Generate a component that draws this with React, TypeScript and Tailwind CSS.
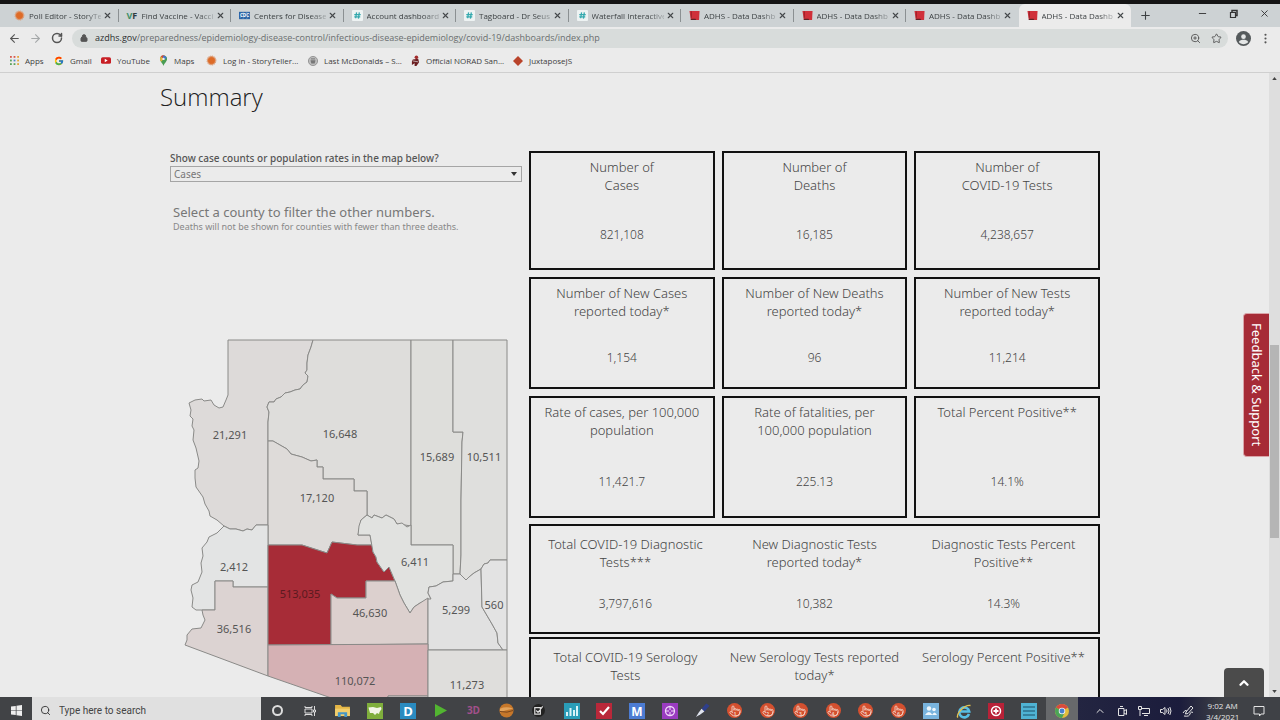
import React, { useState } from "react";
import {
  ArrowLeft,
  ArrowRight,
  ChevronUp,
  Lock,
  Minus,
  MoreVertical,
  Plus,
  Pointer,
  RotateCw,
  Search,
  Star,
  X,
  ZoomIn,
} from "lucide-react";
import { FcGoogle } from "react-icons/fc";

type TabIcon = "story" | "vf" | "cdc" | "tag" | "adhs";

const tabs: { icon: TabIcon; title: string }[] = [
  { icon: "story", title: "Poll Editor - StoryTe" },
  { icon: "vf", title: "Find Vaccine - Vacci" },
  { icon: "cdc", title: "Centers for Disease" },
  { icon: "tag", title: "Account dashboard" },
  { icon: "tag", title: "Tagboard - Dr Seus" },
  { icon: "tag", title: "Waterfall Interactive" },
  { icon: "adhs", title: "ADHS - Data Dashb" },
  { icon: "adhs", title: "ADHS - Data Dashb" },
  { icon: "adhs", title: "ADHS - Data Dashb" },
  { icon: "adhs", title: "ADHS - Data Dashb" },
];

function StoryIcon() {
  return (
    <svg viewBox="0 0 12 12" className="size-[11px] shrink-0">
      <circle cx="6" cy="6" r="4.6" fill="#e07a3c" stroke="#d9a07e" strokeWidth="1.6" strokeDasharray="1 0.8" />
      <circle cx="6" cy="6" r="3.4" fill="#dd6b28" />
    </svg>
  );
}

function Favicon({ kind }: { kind: TabIcon }) {
  if (kind === "story") return <StoryIcon />;
  if (kind === "vf")
    return (
      <span className="w-[11px] shrink-0 text-[9px] font-bold leading-none text-[#2f3b40]">
        <span className="text-[#3f8f68]">V</span>F
      </span>
    );
  if (kind === "cdc")
    return (
      <svg viewBox="0 0 12 12" className="size-[11px] shrink-0">
        <rect y="2" width="12" height="8" fill="#2a64a5" />
        <path d="M1 9L5 2M4 10L9 2M8 10L12 4" stroke="#7fa6d2" strokeWidth="0.6" />
        <text x="1" y="8" fontSize="5" fontWeight="700" fill="#fff">CDC</text>
      </svg>
    );
  if (kind === "tag")
    return (
      <svg viewBox="0 0 12 12" className="size-[11px] shrink-0">
        <rect width="12" height="12" rx="1" fill="#eef3f3" />
        <path d="M5 2.5L4 9M8 2.5L7 9.5M2.5 5H9.5M2.5 7.5H9" stroke="#35a9ae" strokeWidth="1.4" fill="none" />
      </svg>
    );
  return (
    <svg viewBox="0 0 12 12" className="size-[11px] shrink-0">
      <path d="M0.5 1L11.5 1L11 11L2 11Z" fill="#d0303a" />
      <path d="M2.5 1.5V8.5" stroke="#8f1f26" strokeWidth="1" fill="none" />
      <path d="M2 9.500H7L8 11H2Z" fill="#5f2326" />
    </svg>
  );
}

function BrowserTabs() {
  const [active, setActive] = useState<number>(9);
  return (
    <div className="flex h-[23px] items-stretch bg-[#cdd2d4] pl-[6px]">
      <div className="flex min-w-0 max-w-[1125px] flex-1">
        {tabs.map((t, i) => (
          <div
            key={i}
            className={`flex min-w-0 flex-1 items-center pl-2 ${i === active ? "rounded-t-md bg-[#ebebeb]" : ""}`}
          >
            <Favicon kind={t.icon} />
            <button
              type="button"
              onClick={() => setActive(i)}
              className="ml-1 w-[72px] whitespace-nowrap text-left text-[8px] leading-[14px] text-[#3d4244] [mask-image:linear-gradient(to_right,black_78%,rgba(0,0,0,0.25))]"
            >
              {t.title}
            </button>
            <button type="button" aria-label="Close tab" className="ml-[2px] shrink-0 text-[#44484a]">
              <X size={9} strokeWidth={3} />
            </button>
            {i < 8 && <span className="ml-auto h-[13px] w-px bg-[#8b9092]" />}
          </div>
        ))}
      </div>
      <button type="button" aria-label="New tab" className="px-2 text-[#3d4143]">
        <Plus size={13} strokeWidth={2} />
      </button>
      <div className="ml-auto flex items-start pt-[4px] text-[#333]">
        <button type="button" aria-label="Minimize" className="flex w-[31px] justify-center">
          <Minus size={11} strokeWidth={2} />
        </button>
        <button type="button" aria-label="Restore" className="flex w-[31px] justify-center">
          <svg viewBox="0 0 11 11" className="size-[11px]" fill="none" stroke="currentColor">
            <path d="M2.5 4.5H7.5V9.5H2.5Z" strokeWidth="1.2" />
            <path d="M4 4V2.5H9V7.5H8" strokeWidth="1.5" />
          </svg>
        </button>
        <button type="button" aria-label="Close" className="flex w-[31px] justify-center">
          <X size={11} strokeWidth={2} />
        </button>
      </div>
    </div>
  );
}

function AddressBar() {
  return (
    <div className="flex h-[22px] items-center pl-2 pr-2 text-[#555]">
      <button type="button" aria-label="Back" className="w-[21px]">
        <ArrowLeft size={13} strokeWidth={2} />
      </button>
      <button type="button" aria-label="Forward" className="w-[21px] text-[#a5a8a9]">
        <ArrowRight size={13} strokeWidth={2} />
      </button>
      <button type="button" aria-label="Reload" className="w-[22px] pl-px">
        <RotateCw size={12} strokeWidth={3} />
      </button>
      <div className="flex h-[19px] flex-1 items-center rounded-full bg-[#d8dcdb] pl-2 pr-[6px]">
        <Lock size={8} strokeWidth={3} className="shrink-0 fill-[#555]" />
        <p className="ml-[7px] min-w-0 flex-1 truncate text-[9px] leading-[16px] text-[#6a6e6f]">
          <span className="text-[#2b2e2f]">azdhs.gov</span>
          /preparedness/epidemiology-disease-control/infectious-disease-epidemiology/covid-19/dashboards/index.php
        </p>
        <ZoomIn size={11} className="mr-[10px] shrink-0" />
        <Star size={11} className="shrink-0" />
      </div>
      <button type="button" aria-label="Profile" className="ml-2">
        <svg viewBox="0 0 16 16" className="size-[15px]">
          <circle cx="8" cy="8" r="8" fill="#555a5c" />
          <circle cx="8" cy="6" r="2.5" fill="#e4e6e6" />
          <path d="M3 11.8C4 9.8 6 9.4 8 9.4S12 9.8 13 11.8C11.800 13.400 10 14 8 14S4.200 13.400 3 11.800Z" fill="#e4e6e6" />
        </svg>
      </button>
      <button type="button" aria-label="Menu" className="ml-2">
        <MoreVertical size={13} strokeWidth={2} />
      </button>
    </div>
  );
}

function Bookmarks() {
  const link = "flex shrink-0 items-center gap-[6px] whitespace-nowrap";
  return (
    <nav
      className="flex h-6 items-center border-b border-[#cfcfcf] pl-[10px] text-[8px] leading-[14px] text-[#404040]"
      aria-label="Bookmarks"
    >
      <a href="#apps" className={`${link} w-[44px]`}>
        <svg viewBox="0 0 10 10" className="size-[9px]">
          {["#d8574c", "#d8574c", "#e2a63a", "#58a25a", "#4b7fd0", "#e2a63a", "#58a25a", "#58a25a", "#e2a63a"].map(
            (c, i) => (
              <rect key={i} x={(i % 3) * 4} y={Math.floor(i / 3) * 4} width="2" height="2" fill={c} />
            )
          )}
        </svg>
        Apps
      </a>
      <a href="#gmail" className={`${link} w-[47px]`}>
        <FcGoogle size={10} />
        Gmail
      </a>
      <a href="#youtube" className={`${link} w-[58px]`}>
        <svg viewBox="0 0 12 10" className="h-[9px] w-[10px]">
          <rect y="1" width="12" height="8" rx="2" fill="#c81e24" />
          <path d="M4.500 3L8 5L4.500 7Z" fill="#fff" />
        </svg>
        YouTube
      </a>
      <a href="#maps" className={`${link} w-[47px]`}>
        <svg viewBox="0 0 10 14" className="h-[11px] w-[9px]">
          <path d="M5 14C4 10 0.500 8.500 0.500 5A4.500 4.500 0 0 1 9.500 5C9.500 8.500 6 10 5 14Z" fill="#4a9d54" />
          <path d="M0.500 5A4.500 4.500 0 0 1 3.500 0.800L6 4L2 8.500Q0.500 7 0.500 5Z" fill="#e2b53a" />
          <path d="M1.500 2L4 4L7 1A4.500 4.500 0 0 0 1.500 2Z" fill="#d4473c" />
          <path d="M5 0.500A4.500 4.500 0 0 1 9 3.500L6.500 6L4 3Z" fill="#4378cc" />
          <circle cx="5" cy="5" r="1.500" fill="#eee" />
        </svg>
        Maps
      </a>
      <a href="#login" className={`${link} w-[102px]`}>
        <StoryIcon />
        Log in - StoryTeller...
      </a>
      <a href="#mcdonalds" className={`${link} w-[103px]`}>
        <svg viewBox="0 0 12 12" className="size-[10px]">
          <circle cx="6" cy="6" r="5.500" fill="#bdbdbd" stroke="#8c8c8c" />
          <path d="M3 5H9L8 9H4Z" fill="#777" />
          <path d="M3.500 3.500H8.500" stroke="#666" />
        </svg>
        Last McDonalds – S...
      </a>
      <a href="#norad" className={`${link} w-[102px]`}>
        <svg viewBox="0 0 10 12" className="h-[11px] w-[9px]">
          <circle cx="6" cy="2.500" r="2" fill="#a32c2c" />
          <path d="M2 5L8 4L9 8L6 12H4V9L1 11V7Z" fill="#6b1f22" />
          <path d="M2 6.500L8 7.500" stroke="#ddd" strokeWidth="0.800" />
        </svg>
        Official NORAD San...
      </a>
      <a href="#juxtapose" className={link}>
        <svg viewBox="0 0 10 10" className="size-[10px]">
          <path d="M5 0L10 5L5 10L0 5Z" fill="#b9432a" />
        </svg>
        JuxtaposeJS
      </a>
    </nav>
  );
}

const counties = [
  {
    name: "Mohave", value: "21,291", x: 230, y: 439, fill: "#dddad9",
    d: "M228 340L313 340L311 347L308 355L307 363L307 370L305 373L308 376L307 382L303 385L300 389L295 390L290 392L285 393L281 397L276 399L274 402L269 402L267 407L269 412L268 422L268 525L256 525L252 530L247 529L243 531L236 529L230 529L224 526L217 520L210 516L209 511L205 504L203 497L196 487L195 478L195 470L198 468L199 461L196 448L193 440L194 430L192 426L193 419L190 416L191 410L189 403L195 400L202 399L204 401L211 400L214 405L219 408L223 407L226 400L228 395Z",
  },
  {
    name: "Coconino", value: "16,648", x: 340, y: 438, fill: "#dedddb",
    d: "M313 340L411 340L411 526L405 525L397 524L394 519L386 515L382 518L374 515L372 518L367 515L367 491L354 491L354 479L323 479L323 467L317 467L317 460L311 461L302 457L291 454L287 449L273 441L268 441L268 422L269 412L267 407L269 402L274 402L276 399L281 397L285 393L290 392L295 390L300 389L303 385L307 382L308 376L305 373L307 370L307 363L308 355L311 347Z",
  },
  {
    name: "Navajo", value: "15,689", x: 437, y: 461, fill: "#dededb",
    d: "M411 340L453 340L453 432L463 432L462 442L461 500L461 555L460 574L453 574L453 545L411 545Z",
  },
  {
    name: "Apache", value: "10,511", x: 484, y: 461, fill: "#dfdfdd",
    d: "M453 340L507 340L507 560L490 560L488 563L484 564L481 569L474 573L469 577L466 580L463 577L460 574L461 555L461 500L462 442L463 432L453 432Z",
  },
  {
    name: "Yavapai", value: "17,120", x: 317, y: 502, fill: "#dedbd9",
    d: "M268 441L273 441L287 449L291 454L302 457L311 461L317 460L317 467L323 467L323 479L354 479L354 491L367 491L367 515L361 520L358 535L370 535L372 545L357 545L332 542L327 553L302 545L268 545Z",
  },
  {
    name: "La Paz", value: "2,412", x: 234, y: 571, fill: "#e3e4e4",
    d: "M224 526L230 529L236 529L243 531L247 529L252 530L256 525L268 525L268 587L233 587L233 581L215 581L215 610L196 610L192 607L193 598L191 590L192 585L198 582L202 572L201 563L203 556L202 548L207 542L209 537L217 533Z",
  },
  {
    name: "Yuma", value: "36,516", x: 234, y: 633, fill: "#dcd3d2",
    d: "M202 610L215 610L215 581L233 581L233 587L268 587L268 676L185 645L187 640L187 635L192 629L201 628L205 620L203 615Z",
  },
  {
    name: "Maricopa", value: "513,035", x: 300, y: 598, fill: "#a72c37",
    d: "M268 545L302 545L327 553L332 542L357 545L372 545L373 552L376 557L377 562L384 572L389 567L395 581L366 581L366 598L337 598L331 594L331 645L268 645Z",
  },
  {
    name: "Gila", value: "6,411", x: 415, y: 566, fill: "#e1e2e0",
    d: "M361 520L367 515L372 518L374 515L382 518L386 515L394 519L397 524L402 523L407 527L411 525L411 545L453 545L453 581L443 582L436 586L429 587L428 593L431 599L420 603L414 607L410 613L404 603L400 595L395 581L389 567L384 572L377 562L376 557L373 552L370 535L358 535L359 526Z",
  },
  {
    name: "Pinal", value: "46,630", x: 370, y: 617, fill: "#dcd0ce",
    d: "M331 594L337 598L366 598L366 581L395 581L400 595L404 603L410 613L414 607L420 603L428 598L428 644L331 645Z",
  },
  {
    name: "Graham", value: "5,299", x: 456, y: 614, fill: "#e1e1e1",
    d: "M453 574L460 574L463 577L466 580L469 577L474 573L481 569L482 607L492 624L497 633L498 643L503 650L428 650L428 599L431 599L428 593L429 587L436 586L443 582L453 581Z",
  },
  {
    name: "Greenlee", value: "560", x: 494, y: 609, fill: "#e3e3e3",
    d: "M481 569L484 564L488 563L490 560L507 560L507 650L503 650L498 643L497 633L492 624L482 607Z",
  },
  {
    name: "Pima", value: "110,072", x: 355, y: 685, fill: "#d5b1b4",
    d: "M268 645L428 644L428 696L388 696L388 720L340 701L268 676Z",
  },
  {
    name: "Santa Cruz", value: "", x: 0, y: 0, fill: "#dcd3d2",
    d: "M388 696L428 696L428 735L388 720Z",
  },
  {
    name: "Cochise", value: "11,273", x: 467, y: 689, fill: "#dfdedc",
    d: "M428 650L507 650L507 735L428 735Z",
  },
];

function CountyMap() {
  return (
    <svg viewBox="170 335 352 400" className="mt-[102px] w-full" role="img" aria-label="Arizona counties">
      {counties.map((c) => (
        <path key={c.name} d={c.d} fill={c.fill} stroke="#8a8a88" strokeWidth="1" strokeLinejoin="round" />
      ))}
      {counties.map((c) => (
        <text
          key={c.name}
          x={c.x}
          y={c.y}
          textAnchor="middle"
          fontSize="11"
          fill={c.name === "Maricopa" ? "#5b1a20" : "#555"}
        >
          {c.value}
        </text>
      ))}
    </svg>
  );
}

interface StatProps {
  lines: string[];
  value: string;
  gap: string;
}

function Stat({ lines, value, gap }: StatProps) {
  return (
    <div className="text-center">
      <h2 className="min-h-9 text-[13px] leading-[18px]">
        {lines.map((l) => (
          <span key={l} className="block whitespace-nowrap">
            {l}
          </span>
        ))}
      </h2>
      <p className={`text-[12px] leading-[17px] ${gap}`}>{value}</p>
    </div>
  );
}

const cardRows = [
  {
    gap: "mt-8",
    pad: "pb-[25px]",
    items: [
      { lines: ["Number of", "Cases"], value: "821,108" },
      { lines: ["Number of", "Deaths"], value: "16,185" },
      { lines: ["Number of", "COVID-19 Tests"], value: "4,238,657" },
    ],
  },
  {
    gap: "mt-[29px]",
    pad: "pb-[21px]",
    items: [
      { lines: ["Number of New Cases", "reported today*"], value: "1,154" },
      { lines: ["Number of New Deaths", "reported today*"], value: "96" },
      { lines: ["Number of New Tests", "reported today*"], value: "11,214" },
    ],
  },
  {
    gap: "mt-[34px]",
    pad: "pb-[26px]",
    items: [
      { lines: ["Rate of cases, per 100,000", "population"], value: "11,421.7" },
      { lines: ["Rate of fatalities, per", "100,000 population"], value: "225.13" },
      { lines: ["Total Percent Positive**"], value: "14.1%" },
    ],
  },
];

const wideRows = [
  [
    { lines: ["Total COVID-19 Diagnostic", "Tests***"], value: "3,797,616" },
    { lines: ["New Diagnostic Tests", "reported today*"], value: "10,382" },
    { lines: ["Diagnostic Tests Percent", "Positive**"], value: "14.3%" },
  ],
  [
    { lines: ["Total COVID-19 Serology", "Tests"], value: "" },
    { lines: ["New Serology Tests reported", "today*"], value: "" },
    { lines: ["Serology Percent Positive**"], value: "" },
  ],
];

function Dashboard() {
  const [mode, setMode] = useState<string>("Cases");
  return (
    <main className="mx-auto w-full max-w-[949px] pt-[7px]">
      <h1 className="font-['Open_Sans',sans-serif] text-2xl font-light leading-[34px] text-[#222]">Summary</h1>
      <div className="mt-[37px] flex items-start gap-[7px] pl-[10px] pr-[9px] font-['Noto_Sans',sans-serif]">
        <section className="w-[352px] shrink-0">
          <label htmlFor="mode" className="block text-[10px] font-medium leading-[14px] text-[#555]">
            Show case counts or population rates in the map below?
          </label>
          <div className="relative mt-px">
            <select
              id="mode"
              value={mode}
              onChange={(e) => setMode(e.target.value)}
              className="block h-4 w-full appearance-none border border-[#a5a5a5] bg-transparent px-[3px] text-[10px] leading-[14px] text-[#777] outline-none"
            >
              <option>Cases</option>
              <option>Rates</option>
            </select>
            <svg viewBox="0 0 6 4" className="pointer-events-none absolute right-[5px] top-[6px] h-1 w-[6px]">
              <path d="M0 0H6L3 4Z" fill="#333" />
            </svg>
          </div>
          <div className="mt-[22px] pl-[3px] text-[#777]">
            <p className="text-[13px] leading-[17px]">Select a county to filter the other numbers.</p>
            <p className="text-[9px] leading-[12px] text-[#888]">
              Deaths will not be shown for counties with fewer than three deaths.
            </p>
          </div>
          <CountyMap />
        </section>

        <section className="min-w-0 flex-1 font-light text-[#444]">
          <div className="flex flex-col gap-[7px]">
            {cardRows.map((row, r) => (
              <div key={r} className="grid grid-cols-3 gap-[7px]">
                {row.items.map((it, i) => (
                  <div key={i} className={`border-2 border-[#111] pt-[5px] ${row.pad}`}>
                    <Stat {...it} gap={row.gap} />
                  </div>
                ))}
              </div>
            ))}
          </div>
          <div className="mt-[6px] flex flex-col gap-[3px]">
            {wideRows.map((row, r) => (
              <div key={r} className="grid grid-cols-3 border-2 border-[#111] pb-5 pt-[9px]">
                {row.map((it, i) => (
                  <Stat key={i} {...it} gap="mt-6" />
                ))}
              </div>
            ))}
          </div>
        </section>
      </div>
    </main>
  );
}

function Scrollbar() {
  return (
    <div className="flex w-[11px] shrink-0 flex-col items-center bg-[#dedede] py-1">
      <svg viewBox="0 0 6 4" className="h-[3px] w-[5px]">
        <path d="M0 4H6L3 0Z" fill="#444" />
      </svg>
      <div className="flex-[265]" />
      <div className="w-[9px] flex-[193] bg-[#b5b5b5]" />
      <div className="flex-[152]" />
      <svg viewBox="0 0 6 4" className="h-[3px] w-[5px]">
        <path d="M0 0H6L3 4Z" fill="#444" />
      </svg>
    </div>
  );
}

function Tile({ bg, children }: { bg: string; children: React.ReactNode }) {
  return (
    <svg viewBox="0 0 16 16" className="size-4">
      <rect width="16" height="16" fill={bg} />
      {children}
    </svg>
  );
}

function HandIcon({ n }: { n: number }) {
  return (
    <span className="relative flex size-[15px] items-center justify-center rounded-full bg-[#d4502f] text-[#f0c9bc]">
      <Pointer size={12} strokeWidth={2} />
      <span className="absolute bottom-px text-[5px] font-bold leading-[6px]">{n}</span>
    </span>
  );
}

const taskIcons: { label: string; icon: React.ReactNode }[] = [
  { label: "Cortana", icon: <span className="size-[11px] rounded-full border-2 border-[#ddd]" /> },
  {
    label: "Task view",
    icon: (
      <svg viewBox="0 0 12 12" className="size-3" fill="none" stroke="#ddd">
        <path d="M1 4H8V8H1ZM1 1V2.500H8V1M1 11V9.500H8V11M10.500 1V5M10.500 7V11M9.500 5H11.500V7H9.500Z" />
      </svg>
    ),
  },
  {
    label: "Explorer",
    icon: (
      <svg viewBox="0 0 16 14" className="h-[13px] w-[15px]">
        <path d="M0 1H6L7.500 3H16V13H0Z" fill="#e4b646" />
        <path d="M0 5H16V13H0Z" fill="#f2ce6c" />
        <path d="M3 14V9H13V14H10V11H6V14Z" fill="#4596c6" />
      </svg>
    ),
  },
  {
    label: "Maps",
    icon: (
      <Tile bg="#7fae3c">
        <path d="M1.500 4.500L6 4L10 5L14 4L14.500 6L12.500 9L12 11L10 10L8 12L6 10L3 10Z" fill="#f2f5e6" />
      </Tile>
    ),
  },
  {
    label: "D",
    icon: (
      <Tile bg="#2a8bc0">
        <text x="8" y="13" fontSize="13" fontWeight="700" textAnchor="middle" fill="#fff">D</text>
      </Tile>
    ),
  },
  {
    label: "Play",
    icon: (
      <svg viewBox="0 0 12 13" className="h-[13px] w-3">
        <path d="M0 0L12 6.500L0 13Z" fill="#52b531" />
      </svg>
    ),
  },
  { label: "3D", icon: <span className="text-[10px] font-bold text-[#a2508b]">3D</span> },
  {
    label: "Globe",
    icon: (
      <svg viewBox="0 0 16 16" className="size-[15px]">
        <circle cx="8" cy="8" r="7.500" fill="#c6772a" />
        <path d="M1 6Q8 3 15 6Q9 7 1 10Z" fill="#e4a45c" />
        <path d="M1 9Q9 11 15 8" stroke="#75421b" fill="none" />
      </svg>
    ),
  },
  {
    label: "Poll",
    icon: (
      <svg viewBox="0 0 14 14" className="size-[13px]">
        <circle cx="7" cy="7" r="7" fill="#222" />
        <path d="M3 4H9V11H3ZM4.500 7L6.500 9L11.500 2.500" fill="none" stroke="#ddd" strokeWidth="1.300" />
      </svg>
    ),
  },
  {
    label: "Chart",
    icon: (
      <Tile bg="#2a9db8">
        <path d="M3 13V9M6.500 13V5M10 13V7M13 13V3" stroke="#d9f3f8" strokeWidth="2" />
      </Tile>
    ),
  },
  {
    label: "Check",
    icon: (
      <Tile bg="#b9283a">
        <path d="M4 8L7 11L13 4" stroke="#fff" strokeWidth="2.200" fill="none" />
      </Tile>
    ),
  },
  {
    label: "M",
    icon: (
      <Tile bg="#4c7cd3">
        <text x="8" y="12.500" fontSize="12" fontWeight="700" textAnchor="middle" fill="#fff">M</text>
      </Tile>
    ),
  },
  {
    label: "Target",
    icon: (
      <Tile bg="#9a3cc0">
        <circle cx="8" cy="8" r="4.500" stroke="#f0d8f8" strokeWidth="1.300" fill="none" />
        <path d="M8 3V7M8 9V13M3 8H7M9 8H13" stroke="#f0d8f8" />
      </Tile>
    ),
  },
  {
    label: "Pen",
    icon: (
      <svg viewBox="0 0 16 16" className="size-[15px]">
        <path d="M7 6L12 0.500L15.500 3L10 9Z" fill="#2e3f8c" />
        <path d="M7 6L10 9L6 12L1 15L4 10Z" fill="#dfe4ee" />
      </svg>
    ),
  },
  { label: "Hand 1", icon: <HandIcon n={1} /> },
  { label: "Hand 2", icon: <HandIcon n={2} /> },
  { label: "Hand 3", icon: <HandIcon n={3} /> },
  { label: "Hand 4", icon: <HandIcon n={4} /> },
  { label: "Hand 5", icon: <HandIcon n={5} /> },
  { label: "Hand 6", icon: <HandIcon n={6} /> },
  {
    label: "People",
    icon: (
      <Tile bg="#79b4de">
        <circle cx="6" cy="5.500" r="2.200" fill="#eef6fb" />
        <circle cx="11" cy="6.500" r="1.800" fill="#eef6fb" />
        <path d="M2 12Q6 6 9.500 12ZM9 12Q11.500 7 14 12Z" fill="#eef6fb" />
      </Tile>
    ),
  },
  {
    label: "Internet Explorer",
    icon: (
      <svg viewBox="0 0 16 16" className="size-4" fill="none">
        <path d="M13 11A5 5 0 1 1 13.200 8.500H4.500" stroke="#57bfe6" strokeWidth="2.600" />
        <path d="M2 14.500C-1 12 8 1.500 14.500 2.500" stroke="#e3c04e" strokeWidth="1.300" />
      </svg>
    ),
  },
  {
    label: "Medical",
    icon: (
      <Tile bg="#b82238">
        <circle cx="8" cy="8" r="4.500" stroke="#fff" strokeWidth="1.500" fill="none" />
        <path d="M8 5.500V10.500M5.500 8H10.500" stroke="#fff" strokeWidth="1.800" />
      </Tile>
    ),
  },
  {
    label: "List",
    icon: (
      <Tile bg="#4fb3d4">
        <path d="M2 4H14M2 8H14M2 12H14" stroke="#1d5068" strokeWidth="1.200" />
      </Tile>
    ),
  },
  {
    label: "Chrome",
    icon: (
      <svg viewBox="0 0 16 16" className="size-[14px]">
        <circle cx="8" cy="8" r="8" fill="#e2bd3c" />
        <path d="M8 8L1.100 4A8 8 0 0 1 14.900 4Z" fill="#d94a3c" />
        <path d="M1.100 4A8 8 0 0 0 8 16L11 9.700L8 8Z" fill="#4ba457" />
        <circle cx="8" cy="8" r="3.700" fill="#eee" />
        <circle cx="8" cy="8" r="2.800" fill="#4780cf" />
      </svg>
    ),
  },
];

function Taskbar() {
  return (
    <footer className="flex h-[23px] shrink-0 items-stretch bg-[#414346] text-[#e4e4e4]">
      <button type="button" aria-label="Start" className="flex w-8 items-center justify-center pt-1">
        <svg viewBox="0 0 12 12" className="size-[11px]" fill="#eee">
          <path d="M0 1.700L5.200 1V5.600H0ZM6 0.900L12 0V5.600H6ZM0 6.400H5.200V11L0 10.300ZM6 6.400H12V12L6 11.100Z" />
        </svg>
      </button>
      <label className="flex w-[229px] items-center gap-2 bg-[#e0e0e0] pl-2 pt-1 text-[#333]">
        <Search size={11} strokeWidth={2} className="shrink-0" />
        <input
          type="text"
          aria-label="Search"
          placeholder="Type here to search"
          className="w-full bg-transparent font-[Roboto,sans-serif] text-[10px] leading-[14px] outline-none placeholder:text-[#444]"
        />
      </label>
      <div className="flex min-w-0 flex-1">
        {taskIcons.map((t) => (
          <button
            key={t.label}
            type="button"
            aria-label={t.label}
            className={`flex min-w-0 flex-1 items-center justify-center pt-1 ${t.label === "Chrome" ? "bg-[#67696b]" : ""}`}
          >
            {t.icon}
          </button>
        ))}
      </div>
      <div className="flex w-[202px] shrink-0 items-center bg-[linear-gradient(to_right,#232541_0%,#1b1c3c_50%,#3f4146_72%)] pl-4 pt-1">
        <ChevronUp size={12} className="mr-[10px]" />
        <svg viewBox="0 0 12 12" className="mr-[10px] size-3" fill="none" stroke="currentColor">
          <path d="M2.500 3.500H8V10.500H2.500ZM8 6L10.500 4.500V9.500L8 8M4 1.500H7" />
        </svg>
        <svg viewBox="0 0 12 12" className="mr-[10px] size-3" fill="none" stroke="currentColor">
          <path d="M4 3.500H11.500V8.500H4M6 10.500H10M0.500 1.500H3.500V4.500H0.500ZM2 4.500V11" />
        </svg>
        <svg viewBox="0 0 12 12" className="mr-[10px] size-3" fill="none" stroke="currentColor">
          <path d="M0.500 4.500H2.500L5 2.500V9.500L2.500 7.500H0.500ZM6.500 4.500Q7.500 6 6.500 7.500M8 3Q10 6 8 9M9.800 2Q12.200 6 9.800 10" />
        </svg>
        <svg viewBox="0 0 12 12" className="size-3" fill="none" stroke="currentColor">
          <path d="M4 7L9 1L11 3L6 8.500L3.500 9ZM1 8Q3 4 5 6M2 11Q8 12 8 8.500Q10 6 11 7.500" />
        </svg>
        <div className="ml-3 whitespace-nowrap text-center text-[8px] leading-[11px]">
          <p>9:02 AM</p>
          <p>3/4/2021</p>
        </div>
        <svg viewBox="0 0 12 12" className="ml-[14px] size-3 shrink-0" fill="none" stroke="currentColor">
          <path d="M1 1.500H11V9H8L6.500 11V9H1Z" />
        </svg>
      </div>
    </footer>
  );
}

export default function App(): React.ReactElement {
  return (
    <div className="flex h-screen flex-col overflow-hidden bg-[#ebebeb] font-['Open_Sans',sans-serif]">
      <header className="shrink-0 border-t-4 border-[#141414]">
        <BrowserTabs />
        <AddressBar />
        <Bookmarks />
      </header>
      <div className="relative flex min-h-0 flex-1">
        <div className="min-w-0 flex-1 overflow-hidden">
          <Dashboard />
        </div>
        <Scrollbar />
        <a
          href="#feedback"
          className="absolute right-[11px] top-60 flex h-36 w-[26px] items-center justify-center rounded-l border border-r-0 border-[#d9a5a9] bg-[#a62b36] font-['Noto_Sans',sans-serif] text-[13px] text-white [writing-mode:vertical-rl]"
        >
          Feedback &amp; Support
        </a>
        <button
          type="button"
          aria-label="Back to top"
          className="absolute bottom-0 right-4 flex h-[29px] w-10 items-center justify-center rounded-t bg-[#4b4b4b] text-white"
        >
          <ChevronUp size={14} strokeWidth={4} />
        </button>
      </div>
      <Taskbar />
    </div>
  );
}
